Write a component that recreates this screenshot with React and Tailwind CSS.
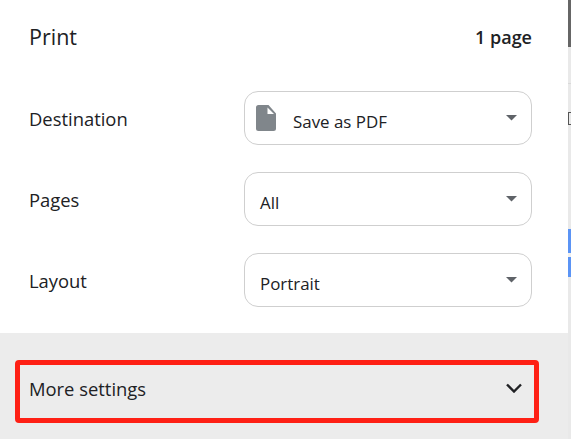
import React from 'react';

const Caret = () => (
  <svg width="11" height="6" viewBox="0 0 11 6" className="shrink-0">
    <path d="M0 0h11L5.5 5.5z" fill="#5f6368" />
  </svg>
);

const FileIcon = () => (
  <svg width="20" height="26" viewBox="0 0 20 26" className="shrink-0">
    <path
      d="M2.5 0H12.5l7.5 8.5V23.5a2.5 2.5 0 0 1-2.5 2.5h-15A2.5 2.5 0 0 1 0 23.5v-21A2.5 2.5 0 0 1 2.5 0z"
      fill="#80868b"
    />
    <path d="M11.5 2.5l6.5 6.5h-6.5z" fill="#fff" />
  </svg>
);

const Row = ({ label, value, icon }) => (
  <div className="flex items-center h-[54px]">
    <div className="w-[244px] pl-[29px] text-[18.4px] leading-[24px] text-[#202124] mt-[2px]">{label}</div>
    <div className="flex items-center w-[288px] h-[54px] rounded-[14px] border border-[#cfcfcf] bg-white pl-[11px] pr-[14px]">
      {icon}
      <span className={`flex-1 text-[16.9px] leading-[22px] text-[#202124] mt-[7px] ${icon ? 'pl-[17px]' : 'pl-[4px]'}`}>{value}</span>
      <Caret />
    </div>
  </div>
);

// sliver of the page behind the dialog, right edge of the shot
const EdgeStrip = () => (
  <div className="flex flex-col w-[3px] h-full bg-[#e9e9e9]">
    <div className="h-[47px] bg-[#666666]" />
    <div className="h-[36px]" />
    <div className="h-px bg-[#d9d9d9]" />
    <div className="h-[28px]" />
    <div className="h-[13px] border-l border-y border-[#555555]" />
    <div className="h-[104px]" />
    <div className="h-[24px] bg-[#5b94f5]" />
    <div className="h-[4px] bg-[#f0f0f0]" />
    <div className="h-[20px] bg-[#5b94f5]" />
  </div>
);

export default function App() {
  return (
    <div className="flex w-[571px] h-[439px] overflow-hidden bg-white font-['Open_Sans',sans-serif]">
      <div className="w-[568px] h-full flex flex-col">
        <div className="flex items-center justify-between h-[75px] pl-[29px] pr-[36px]">
          <span className="text-[21.5px] text-[#202124]">Print</span>
          <span className="text-[18px] font-semibold text-[#202124]">1 page</span>
        </div>
        <div className="flex flex-col gap-[27px] mt-[16px]">
          <Row label="Destination" value="Save as PDF" icon={<FileIcon />} />
          <Row label="Pages" value="All" />
          <Row label="Layout" value="Portrait" />
        </div>
        <div className="flex-1 mt-[26px] bg-[#ececec] pt-[27px] pl-[15px]">
          <div className="flex items-center justify-between w-[524px] h-[63px] rounded-[4px] border-[5px] border-[#fe2015] pl-[9px] pr-[12px]">
            <span className="text-[18.4px] leading-[24px] text-[#202124] mb-[6px]">More settings</span>
            <svg width="16" height="10" viewBox="0 0 16 10" fill="none" stroke="#202124" strokeWidth="2.4" className="mb-[7px]">
              <path d="M1 1.5l7 7 7-7" />
            </svg>
          </div>
        </div>
      </div>
      <EdgeStrip />
    </div>
  );
}
